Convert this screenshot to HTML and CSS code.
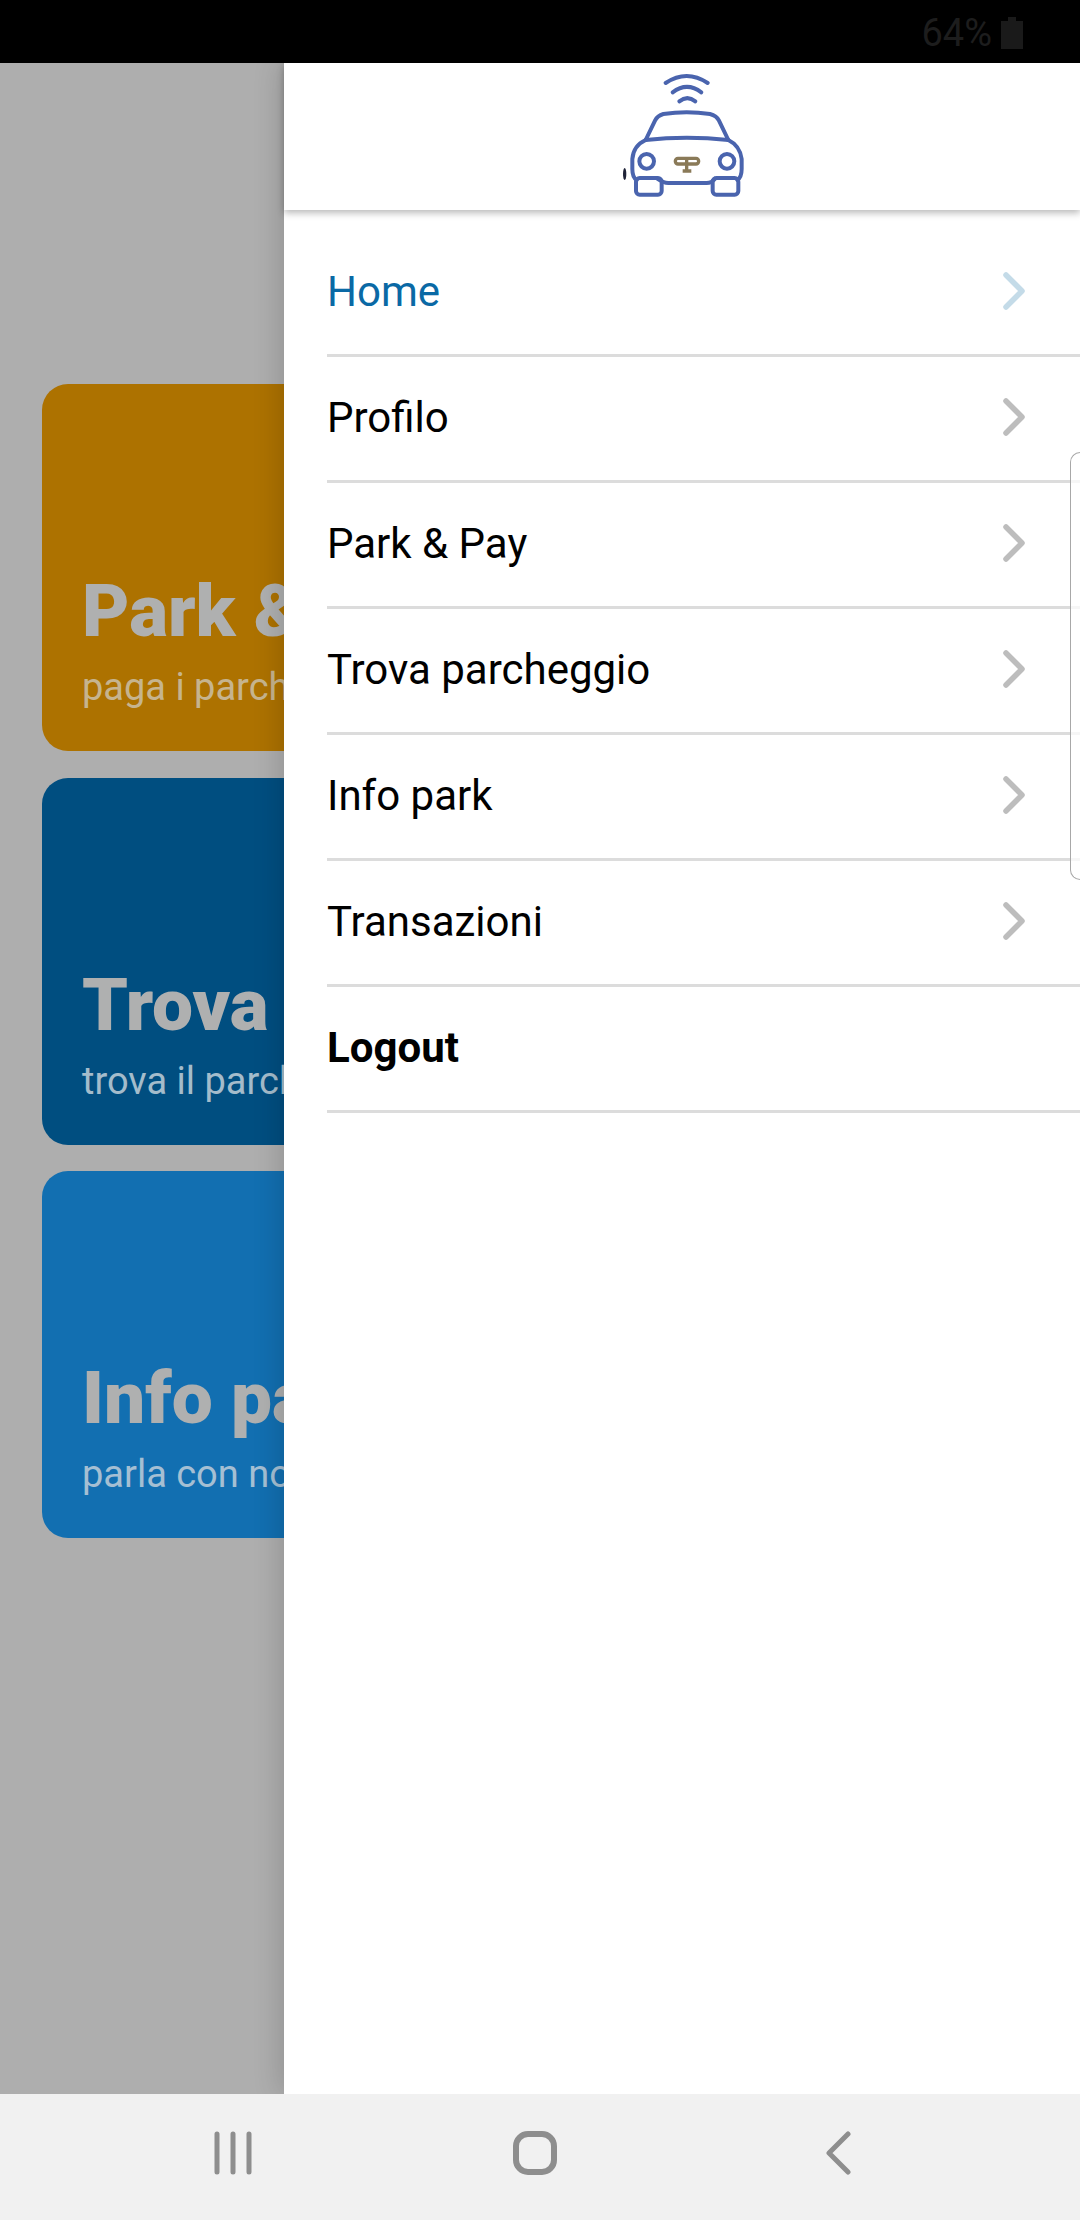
FILE: index.html
```html
<!DOCTYPE html>
<html lang="it">
<head>
<meta charset="utf-8">
<title>Park &amp; Pay</title>
<link rel="stylesheet" href="styles.css">
</head>
<body>
<div class="phone">
  <header class="status-bar">
    <span class="battery-level">64%</span>
    <svg class="battery-icon" viewBox="0 0 22 32" aria-hidden="true">
      <path d="M7 0h8v4h7v28H0V4h7z"/>
    </svg>
  </header>

  <div class="screen">
    <main class="home">
      <section class="tile tile-park">
        <h2 class="tile-title">Park &amp; Pay</h2>
        <p class="tile-text">paga i parcheggi</p>
      </section>
      <section class="tile tile-find">
        <h2 class="tile-title">Trova parcheggio</h2>
        <p class="tile-text">trova il parcheggio</p>
      </section>
      <section class="tile tile-info">
        <h2 class="tile-title">Info park</h2>
        <p class="tile-text">parla con noi</p>
      </section>
    </main>

    <aside class="drawer">
      <div class="drawer-head">
        <svg class="logo" viewBox="60 25 380 390" aria-hidden="true">
          <g class="logo-lines">
            <path d="M197 67Q260 25 323 67"/>
            <path d="M218 95Q261 62 304 95"/>
            <path d="M238 122Q262 103 286 122"/>
            <path d="M137 238L165 180Q172 165 190 160Q260 150 330 160Q350 165 357 180L385 238"/>
            <path d="M137 238Q260 225 385 238"/>
            <path d="M137 238Q100 255 97 295V325Q97 350 110 358M172 354Q190 367 205 367H320Q335 367 345 354M412 358Q425 350 425 325V295Q420 255 385 238"/>
            <rect x="108" y="352" width="77" height="50" rx="11"/>
            <rect x="338" y="352" width="77" height="50" rx="11"/>
            <circle cx="140" cy="302" r="22"/>
            <circle cx="381" cy="302" r="22"/>
          </g>
          <g class="logo-mark">
            <rect x="226" y="293" width="70" height="17" rx="8"/>
            <path d="M260 293V330M248 331H274"/>
          </g>
          <ellipse class="logo-speck" cx="74" cy="340" rx="5" ry="18"/>
        </svg>
      </div>

      <nav class="menu">
        <a class="menu-row is-current">Home
          <svg class="chevron" viewBox="0 0 22 38" aria-hidden="true"><path d="M3 3L19 19L3 35"/></svg>
        </a>
        <a class="menu-row">Profilo
          <svg class="chevron" viewBox="0 0 22 38" aria-hidden="true"><path d="M3 3L19 19L3 35"/></svg>
        </a>
        <a class="menu-row">Park &amp; Pay
          <svg class="chevron" viewBox="0 0 22 38" aria-hidden="true"><path d="M3 3L19 19L3 35"/></svg>
        </a>
        <a class="menu-row">Trova parcheggio
          <svg class="chevron" viewBox="0 0 22 38" aria-hidden="true"><path d="M3 3L19 19L3 35"/></svg>
        </a>
        <a class="menu-row">Info park
          <svg class="chevron" viewBox="0 0 22 38" aria-hidden="true"><path d="M3 3L19 19L3 35"/></svg>
        </a>
        <a class="menu-row">Transazioni
          <svg class="chevron" viewBox="0 0 22 38" aria-hidden="true"><path d="M3 3L19 19L3 35"/></svg>
        </a>
        <a class="menu-row menu-logout">Logout</a>
      </nav>
    </aside>

    <div class="edge-handle"></div>
  </div>

  <footer class="nav-bar">
    <svg class="nav-icon" viewBox="0 0 60 44" aria-hidden="true">
      <path d="M14 3V41M30 3V41M46 3V41"/>
    </svg>
    <svg class="nav-icon nav-home" viewBox="0 0 60 44" aria-hidden="true">
      <rect x="11" y="3" width="38" height="38" rx="12"/>
    </svg>
    <svg class="nav-icon" viewBox="0 0 60 44" aria-hidden="true">
      <path d="M41 3L22 22L41 41"/>
    </svg>
  </footer>
</div>
</body>
</html>
```

FILE: styles.css
```css
* {
  box-sizing: border-box;
}

html,
body {
  margin: 0;
  padding: 0;
}

.phone {
  display: flex;
  flex-direction: column;
  width: 1080px;
  height: 2220px;
  overflow: hidden;
  font-family: Roboto, "Liberation Sans", sans-serif;
}

/* Status bar */
.status-bar {
  display: flex;
  flex: 0 0 63px;
  align-items: center;
  justify-content: flex-end;
  gap: 9px;
  padding: 2px 57px 0 0;
  background: #000;
  color: #1d1d1d;
}

.battery-level {
  font-size: 38px;
  line-height: 1;
}

.battery-icon {
  width: 22px;
  height: 32px;
  fill: #1a1a1a;
}

/* Area under the drawer and the drawer itself */
.screen {
  position: relative;
  flex: 1;
  overflow: hidden;
}

.home {
  display: flex;
  flex-direction: column;
  gap: 26.5px;
  height: 100%;
  padding: 321px 42px 0;
  background: #aeaeae;
}

.tile {
  display: flex;
  flex: 0 0 367px;
  flex-direction: column;
  justify-content: flex-end;
  padding: 0 40px 40px;
  border-radius: 26px;
  white-space: nowrap;
}

.tile-park {
  background: #ad7200;
  color: #c6b48e;
}

.tile-find {
  background: #004e80;
  color: #a4bccb;
}

.tile-info {
  background: #126fb1;
  color: #a5bfd3;
}

.tile-title {
  margin: 0 0 10px;
  color: #afb0b0;
  font-size: 73px;
  font-weight: 900;
  line-height: 84px;
}

.tile-text {
  margin: 0;
  font-size: 38px;
  line-height: 48px;
}

.drawer {
  position: absolute;
  top: 0;
  right: 0;
  bottom: 0;
  left: 284px;
  background: #fff;
  box-shadow: -4px 0 26px rgba(0, 0, 0, 0.16);
}

.drawer-head {
  position: relative;
  height: 147px;
  padding: 6px 0 0 336px;
  background: #fff;
  box-shadow: 0 3px 7px rgba(0, 0, 0, 0.28);
}

.logo {
  display: block;
  width: 126.67px;
  height: 130px;
}

.logo-lines {
  fill: none;
  stroke: #4a64ae;
  stroke-width: 12;
  stroke-linecap: round;
  stroke-linejoin: round;
}

.logo-mark {
  fill: none;
  stroke: #8a7a58;
  stroke-width: 10;
}

.logo-speck {
  fill: #1f2338;
}

.menu {
  display: flex;
  flex-direction: column;
  padding: 21px 0 0 43px;
}

.menu-row {
  display: flex;
  flex: 0 0 126px;
  align-items: center;
  justify-content: space-between;
  padding: 0 55px 3px 0;
  border-bottom: 3px solid #dcdcdc;
  color: #000;
  font-size: 42px;
}

.is-current {
  color: #0a69a5;
}

.menu-logout {
  font-weight: 700;
}

.chevron {
  width: 22px;
  height: 38px;
  fill: none;
  stroke: #bdbdbd;
  stroke-width: 5.5;
  stroke-linecap: round;
  stroke-linejoin: round;
}

.is-current .chevron {
  stroke: #c4dbe8;
}

/* Samsung edge panel handle, resting over the drawer */
.edge-handle {
  position: absolute;
  top: 389px;
  right: 0;
  width: 10px;
  height: 428px;
  border: 1.5px solid #a8a8a8;
  border-right: 0;
  border-radius: 14px 0 0 14px;
  background: rgba(255, 255, 255, 0.75);
}

/* Navigation bar */
.nav-bar {
  display: flex;
  flex: 0 0 126px;
  align-items: center;
  justify-content: center;
  padding: 0 10px 8px 0;
  background: #f1f1f1;
}

.nav-icon {
  width: 60px;
  height: 44px;
  margin: 0 121px;
  fill: none;
  stroke: #8e8e8e;
  stroke-width: 5;
  stroke-linecap: round;
  stroke-linejoin: round;
}

.nav-home {
  stroke-width: 6;
}
```
